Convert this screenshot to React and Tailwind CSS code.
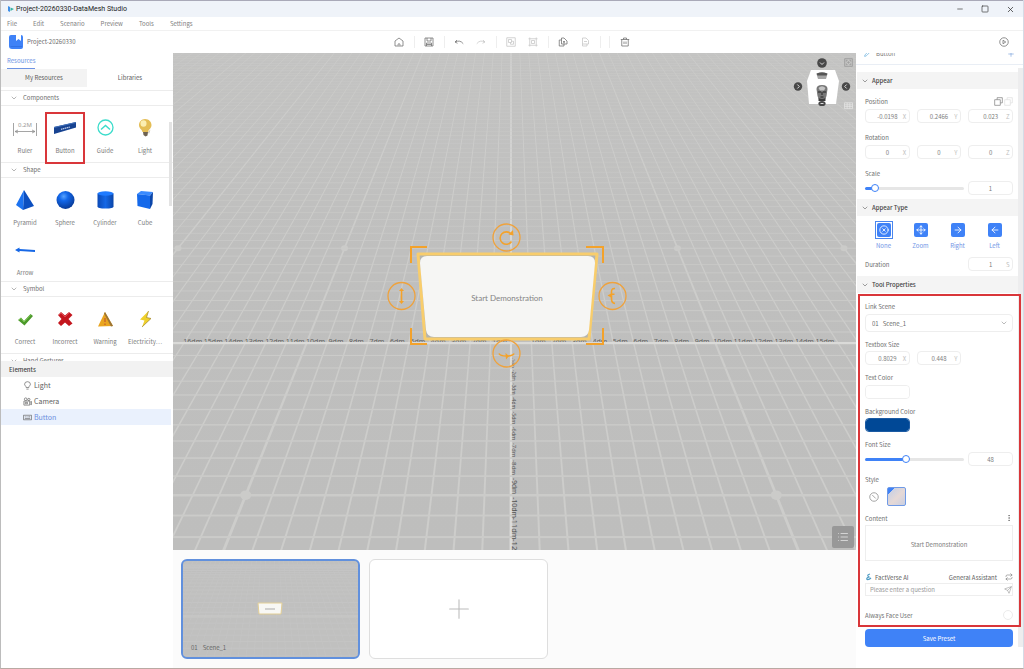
import React from "react";
import {
  Minus, Square, X, ChevronDown, CircleX, Move, ArrowRight, ArrowLeft, List, Plus,
  EllipsisVertical, Send, Repeat, Pencil,
} from "lucide-react";

/* ---------- Floor grid projection ---------- */
const CX = 338;
const HORIZON = -221;
const lineY = (n) => HORIZON + 22350 / (43.7 + n);
const unit = (y) => 0.04 * (y - HORIZON);

function Floor() {
  const rows = Array.from({ length: 72 }, (_, i) => i - 13);
  const cols = Array.from({ length: 101 }, (_, i) => i - 50);
  const top = unit(0);
  const bottom = unit(500);
  return (
    <>
      <defs>
        <linearGradient id="floor" x1="0" y1="0" x2="0" y2="1">
          <stop offset="0" stopColor="#c3c3c2" />
          <stop offset="0.4" stopColor="#bfbfbe" />
          <stop offset="1" stopColor="#bebebd" />
        </linearGradient>
      </defs>
      <rect x="-400" width="1483" height="497" fill="url(#floor)" />
      {cols.map((k) => {
        const w = k === 0 ? 0.05 : k % 10 === 0 ? 0.055 : 0.036;
        return (
          <polygon
            key={k}
            fill={k === 0 ? "#dcdcda" : "#cdcdcb"}
            points={`${CX + (k - w) * top},0 ${CX + (k + w) * top},0 ${CX + (k + w) * bottom},500 ${CX + (k - w) * bottom},500`}
          />
        );
      })}
      {rows.map((n) => {
        const z = 43.7 + n;
        const w = (22350 / (z * z)) * (n % 10 === 0 ? 0.13 : 0.09);
        return (
          <rect key={n} x="-400" width="1483" y={lineY(n) - w / 2} height={Math.max(w, 0.4)} fill={n === 0 ? "#dadad8" : "#cbcbc9"} />
        );
      })}
      {[-10, 10].map((n) =>
        [-20, -10, 10, 20].map((k) => {
          const y = lineY(n);
          const x = CX + k * unit(y);
          const r = unit(y) * 0.21;
          return <ellipse key={`${n}:${k}`} cx={x} cy={y} rx={r} ry={r * 0.85} fill="#cbcbc9" />;
        })
      )}
    </>
  );
}

function AxisLabels() {
  const s = unit(lineY(0));
  return (
    <g fill="#626261" fontFamily="'Noto Sans', sans-serif">
      {Array.from({ length: 16 }, (_, i) => i + 1).map((n) => (
        <text key={`l${n}`} x={CX + 8 - s * n} y="291" fontSize="7" textAnchor="middle">{`-${n}dm`}</text>
      ))}
      {Array.from({ length: 15 }, (_, i) => i + 1).map((n) => (
        <text key={`r${n}`} x={CX + 7 + s * n} y="291" fontSize="7" textAnchor="middle">{`${n}dm`}</text>
      ))}
      <rect x="-400" y="289" width="1483" height="2" fill="#dadad8" />
      {Array.from({ length: 12 }, (_, i) => i + 1).map((n) => {
        const y = lineY(-n);
        const gap = lineY(-n - 1) - y;
        return (
          <text key={`d${n}`} fill="#555" fontSize={gap * 0.34} transform={`translate(${CX + 1} ${y + 2}) rotate(90)`}>{`-${n}dm`}</text>
        );
      })}
    </g>
  );
}

function SceneCanvas() {
  return (
    <svg viewBox="0 0 683 497" preserveAspectRatio="xMidYMid slice" className="absolute inset-0 size-full">
      <Floor />
      <AxisLabels />
      <path d="M245 201H424L416 286H252Z" fill="#b4b4ae" stroke="#f8cd6c" strokeWidth="3" strokeLinejoin="round" />
      <path d="M254 203H415Q422 203 422 210L416 277Q415 284 408 284H261Q254 284 253 277L247 210Q247 203 254 203Z" fill="#f6f6f4" />
      <g fill="none" stroke="#f3a22b" strokeWidth="2">
        <path d="M238 210V194H254M413 194H430V210M238 275V291H254M413 291H430V275" />
      </g>
      <g fill="none" stroke="#efa23c" strokeWidth="1.3">
        <circle cx="333.500" cy="184.500" r="13.500" />
        <circle cx="228.500" cy="243" r="13.500" />
        <circle cx="439.500" cy="243" r="13.500" />
        <circle cx="333.500" cy="300.500" r="13.500" />
      </g>
      <g fill="none" stroke="#f3a22b" strokeWidth="1.6">
        <path d="M338.500 188.500A6.200 6.200 0 1 1 338 181" />
        <path d="M228.500 237V249" />
        <path d="M442 235.500Q438 235 438.500 240V246Q438.500 250 442 250.500" />
        <path d="M326 300.500Q327 303 333.500 303T341 300.500" />
      </g>
      <g fill="#f3a22b">
        <path d="M335.500 181.500L340.500 182.500L340 177Z" />
        <path d="M226 238L228.500 235L231 238ZM226 248L228.500 251L231 248Z" />
        <path d="M434.500 242.500L438 240.500H441.500V242H438V244.500Z" />
        <path d="M332.500 300L336 303L333 306.500Z" />
      </g>
      <text x="334" y="248" fontSize="8" textAnchor="middle" fill="#858585" fontFamily="Lato, sans-serif">Start Demonstration</text>
    </svg>
  );
}

function ViewCube() {
  return (
    <svg viewBox="0 0 64 56" className="h-14 w-16">
      <path d="M19 16H43L47 27L44 50H17L15 27Z" fill="#fff" />
      <g fill="#484848">
        <circle cx="30" cy="9" r="4.800" />
        <circle cx="6" cy="32.500" r="4.200" />
        <circle cx="54" cy="32.500" r="4.200" />
        <ellipse cx="30" cy="49.500" rx="3.600" ry="2.600" />
      </g>
      <path d="M28 8.500L30 10.500L32 8.500M5.300 30.500L7.300 32.500L5.300 34.500M54.700 30.500L52.700 32.500L54.700 34.500M28.500 49.500H31.500" fill="none" stroke="#ddd" />
      <path d="M24.500 20Q30 16 35.500 20L34 25H26Z" fill="#a5a5a5" />
      <path d="M24.500 19.500Q30 17.500 35.500 19.500L34.500 21.500H25.500Z" fill="#555" />
      <path d="M24.500 35Q24.500 31 30 31T35.500 35L34.500 42Q33 47 30 47Q27 47 25.500 42Z" fill="#777" />
      <path d="M26.500 34Q30 30.500 33.500 34L32 36.500H28Z" fill="#c4c4c4" />
      <path d="M26 38H29M31 38H34M28.500 43H31.500M30 38V41" stroke="#252525" />
      <path d="M26.500 44Q30 46 33.500 44V47H26.500Z" fill="#3a3a3a" />
    </svg>
  );
}

/* ---------- Line icons ---------- */
const Line = ({ className = "size-[10px]", children }) => (
  <svg viewBox="0 0 20 20" className={className} fill="none" stroke="currentColor" strokeWidth="1.500" strokeLinejoin="round">{children}</svg>
);
const HomeIcon = () => <Line><path d="M2 18V8L10 2L18 8V18ZM8 17V14.500Q10 12 12 14.500V17" /></Line>;
const SaveIcon = () => <Line><path d="M2 2H18V18H2ZM6 2V8H14V2M5 18V12H15V18M5 15H15" /></Line>;
const UndoIcon = () => <Line><path d="M6 6L2 10L7 12.500M2.500 10Q12 5 18.500 13.500" /></Line>;
const RedoIcon = () => <Line><path d="M14 6L18 10L13 12.500M17.500 10Q8 5 1.500 13.500" /></Line>;
const GroupIcon = () => <Line><path d="M1.500 1.500H18.500V18.500H1.500ZM5 5H11V11H5ZM9 14.500H15V8.500M9 14.500V11M11 8.500H15" /></Line>;
const UngroupIcon = () => <Line><path d="M3.500 3.500H16.500V16.500H3.500ZM7 7H13V13H7ZM1 3.500H3.500V1M19 3.500H16.500V1M16.500 19V16.500H19M1 16.500H3.500V19" /></Line>;
const CopyIcon = () => <Line><path d="M7 2H12L18 8V14H7ZM7 6H2.500V18H12V14M10 9H14M10 11.500H14" /></Line>;
const PasteIcon = () => <Line><path d="M5 2H12L17 7V14H5ZM5 14V18H14V14M8 9H14" /></Line>;
const TrashIcon = () => <Line><path d="M1.500 5H18.500M7 5V2H13V5M3.500 5V18H16.500V5M8 9V14M12 9V14" /></Line>;
const PlayIcon = () => <Line><circle cx="10" cy="10" r="8.500" /><path d="M8 6.500L13.500 10L8 13.500Z" /></Line>;
const BulbIcon = () => <Line className="size-[9px]"><path d="M7 14.500Q7 12.500 5.500 11Q3.500 9 3.500 7Q4 1.500 10 1.500T16.500 7Q16.500 9 14.500 11Q13 12.500 13 14.500ZM7.500 18H12.500" /></Line>;
const CameraIcon = () => (
  <Line className="size-[9px]">
    <circle cx="6" cy="5" r="3" /><circle cx="13" cy="5.500" r="2.500" />
    <path d="M2 9H15V18H2ZM15 12L19 10V17L15 15M5 12H10V15H5Z" />
  </Line>
);
const ButtonIcon = () => <Line className="size-[9px]"><path d="M1 5H19V15H1ZM4 8.500H6M8 8.500H10M12 8.500H16M4 12H16" /></Line>;
const FocusIcon = () => <Line className="size-[9px]"><path d="M1.500 1.500H18.500V18.500H1.500ZM5 8V5H8M12 5H15V8M15 12V15H12M8 15H5V12" /><circle cx="10" cy="10" r="1.500" /></Line>;
const GridIcon = () => <Line className="size-[9px]"><path d="M1 4H19V17H1ZM1 8.500H19M1 12.500H19M7 4V17M13 4V17" /></Line>;
const PagesIcon = () => <Line className="size-[9px]"><path d="M7 1.500H18.500V13H14V18.500H1.500V6H7ZM7 6H14V13" /></Line>;
const NoneIcon = () => <Line className="size-[10px]"><circle cx="10" cy="10" r="8.500" /><path d="M6.500 6L13.500 13" /></Line>;

/* ---------- Library artwork ---------- */
const Art = ({ children }) => <svg viewBox="0 0 28 28" className="size-7">{children}</svg>;

const art = {
  Ruler: (
    <Art>
      <text x="14" y="13" fontSize="6" textAnchor="middle" fill="#999" fontFamily="'Noto Sans', sans-serif">0.2M</text>
      <path d="M2.500 9V22M25.500 9V22M4 17.500H24M7 16L4 17.500L7 19M21 16L24 17.500L21 19" fill="none" stroke="#8e8e8e" strokeWidth=".8" />
    </Art>
  ),
  Button: (
    <Art>
      <path d="M3 13L25 8V13.500L3 20Z" fill="#174391" />
      <path d="M3 13L25 8V9L3 14Z" fill="#4472ba" />
      <path d="M10 15.300L19 13" stroke="#b9c8e6" strokeWidth="1.200" strokeDasharray="1.500 .5" />
    </Art>
  ),
  Guide: (
    <Art>
      <circle cx="14.500" cy="13.500" r="7.500" fill="none" stroke="#3cdccb" strokeWidth="1.300" />
      <path d="M10 15.500L14.500 11.500L19 15.500" fill="none" stroke="#3cdccb" strokeWidth="1.500" />
    </Art>
  ),
  Light: (
    <Art>
      <path d="M14 5C18 5 20.500 8 20.500 11C20.500 14.500 17.500 15.500 17 18H11.500C11 15.500 8 14.500 8 11C8 8 10.500 5 14 5Z" fill="#e4bd55" />
      <ellipse cx="12.500" cy="9.500" rx="3" ry="3.200" fill="#fbeeb2" />
      <path d="M12 18H17L16.500 21.500L14.500 22.500L12.500 21Z" fill="#6e6251" />
      <path d="M17 18L19.500 15.500L18 20Z" fill="#cfc6ae" />
    </Art>
  ),
  Pyramid: (
    <Art>
      <path d="M13 4L23 20L12 24Z" fill="#0c4fc0" />
      <path d="M13 4L12 24L5 19Z" fill="#1d73f0" />
    </Art>
  ),
  Sphere: (
    <Art>
      <defs>
        <radialGradient id="ball" cx=".4" cy=".3" r=".7">
          <stop offset="0" stopColor="#58a3ff" />
          <stop offset=".35" stopColor="#1267ea" />
          <stop offset="1" stopColor="#083b98" />
        </radialGradient>
      </defs>
      <circle cx="14.500" cy="14" r="9" fill="url(#ball)" />
    </Art>
  ),
  Cylinder: (
    <Art>
      <defs>
        <linearGradient id="tube">
          <stop offset="0" stopColor="#0b4ab6" />
          <stop offset=".5" stopColor="#1568e6" />
          <stop offset="1" stopColor="#0a45a8" />
        </linearGradient>
      </defs>
      <path d="M6.500 7.500V20.500Q6.500 22.500 14.500 22.500T22.500 20.500V7.500Z" fill="url(#tube)" />
      <ellipse cx="14.500" cy="7.500" rx="8" ry="2.200" fill="#1f7bff" />
    </Art>
  ),
  Cube: (
    <Art>
      <path d="M6 8L10 5L22 6L19 9.500Z" fill="#3a8bff" />
      <path d="M6 8L19 9.500V23L6.500 20Z" fill="#1569ea" />
      <path d="M19 9.500L22 6L21.500 18L19 23Z" fill="#0b46aa" />
    </Art>
  ),
  Arrow: (
    <Art>
      <path d="M4 14L8.500 11.500V13L24 14V16L8.500 15V16.500Z" fill="#1768e6" />
    </Art>
  ),
  Correct: (
    <Art>
      <path d="M7 15L10 12.500L13 16L19.500 9L22 11L13.500 20.500Z" fill="#4c9a2a" />
      <path d="M8 15L10 13.300L13 17L19.500 10" fill="none" stroke="#7cc653" />
    </Art>
  ),
  Incorrect: (
    <Art>
      <path d="M7 10L10 7L14 10.500L18 7L21.500 10L17.500 14L21.500 18.500L18 21L14 17.500L10 21L7 18L10.500 14Z" fill="#c4161e" />
      <path d="M8 10L10 8L14 12L18 8" fill="none" stroke="#e5565a" strokeWidth=".8" />
    </Art>
  ),
  Warning: (
    <Art>
      <path d="M14 7L22 21L7 21.500Z" fill="#e9a51f" />
      <path d="M14 7L22 21L20 21.500L13 8.500Z" fill="#9a7436" />
      <path d="M14 13V17M14 18.500V20" stroke="#c65a2c" strokeWidth="1.200" />
    </Art>
  ),
  "Electricity⋯": (
    <Art>
      <path d="M17.500 6L9 14.500L13.500 15.500L11 22L20 13.500L15.500 12.500Z" fill="#efd02b" />
      <path d="M17.500 6L15.500 12.500L20 13.500L11 22" fill="none" stroke="#9d8325" strokeWidth=".7" />
    </Art>
  ),
};

/* ---------- Shared controls ---------- */
function GroupHeader({ children }) {
  return (
    <button className="flex h-4 w-full shrink-0 items-center gap-[5px] border-y border-[#ececec] pl-[9px] text-left leading-[14px] text-[#6d6d6d]">
      <ChevronDown className="size-2" strokeWidth={1.5} />
      <span>{children}</span>
    </button>
  );
}

function Library({ items, marked }) {
  return (
    <div className={items.length > 4 ? "grid shrink-0 grid-cols-4 pt-[3px] pr-2 pl-1" : "grid shrink-0 grid-cols-4 py-[3px] pr-2 pl-1"}>
      {items.map((name) => (
        <button key={name} className="relative flex h-[50px] flex-col items-center gap-px pt-[5px] text-[#7c7c7c]">
          {art[name]}
          <span className="h-[15px] leading-[15px] whitespace-nowrap">{name}</span>
          {name === marked && <span className="absolute inset-x-0 top-[3px] -bottom-[5px] border-2 border-[#d9363a]" />}
        </button>
      ))}
    </div>
  );
}

function PropHeader({ children }) {
  return (
    <button className="flex h-[17px] w-full shrink-0 items-center gap-[3px] bg-[#f4f4f4] pl-1 text-left font-medium text-[#444]">
      <ChevronDown className="size-2" strokeWidth={1.5} />
      {children}
    </button>
  );
}

function NumberField({ label, value, suffix }) {
  return (
    <label className="flex h-[14px] min-w-0 items-center rounded-sm border border-[#eeeeee] bg-white">
      <input aria-label={label} defaultValue={value} className={suffix ? "w-full min-w-0 flex-1 pl-[6px] text-center text-[#7c7c7c] outline-none" : "w-full min-w-0 flex-1 text-center text-[#7c7c7c] outline-none"} />
      {suffix && <span className="w-[6px] text-[#bdbdbd]">{suffix}</span>}
    </label>
  );
}

const Label = ({ children, htmlFor }) => (
  <label htmlFor={htmlFor} className="block h-3 leading-[13px] text-[#6f6f6f]">{children}</label>
);

const rangeBase =
  "h-[3px] w-full appearance-none rounded-full outline-none [&::-webkit-slider-thumb]:size-2 [&::-webkit-slider-thumb]:appearance-none [&::-webkit-slider-thumb]:rounded-full [&::-webkit-slider-thumb]:border [&::-webkit-slider-thumb]:border-solid [&::-webkit-slider-thumb]:border-[#3f82f7] [&::-webkit-slider-thumb]:bg-white ";
const colorBase =
  "block h-[14px] w-[45px] appearance-none rounded-sm border bg-white [&::-webkit-color-swatch-wrapper]:p-0 [&::-webkit-color-swatch]:rounded-xs [&::-webkit-color-swatch]:border-0 ";

function SliderRow({ id, label, value, fill, max, pos }) {
  return (
    <div className="flex items-center gap-1">
      <div className="flex flex-1 items-center">
        <input id={id} type="range" min="0" max={max} defaultValue={pos} className={rangeBase + fill} />
      </div>
      <div className="w-[45px]"><NumberField label={label} value={value} /></div>
    </div>
  );
}

function AppearOption({ icon: Icon, label, active }) {
  return (
    <button className="flex flex-col items-center text-[#7095e6]">
      <span className={active ? "border border-[#4b86ee] p-px" : "border border-transparent p-px"}>
        <span className="flex size-[14px] items-center justify-center rounded-xs bg-[#3f82f7] text-white">
          <Icon className="size-[10px]" strokeWidth={2} />
        </span>
      </span>
      <span className="h-3 leading-[13px]">{label}</span>
    </button>
  );
}

function ToolButton({ icon: Icon, label, muted }) {
  return (
    <button aria-label={label} className={muted ? "flex w-[15px] justify-center text-[#c4c4c4]" : "flex w-[15px] justify-center text-[#6c6c6c]"}>
      <Icon />
    </button>
  );
}
const Sep = () => <span className="h-3 w-px bg-[#eeeeee]" />;

/* ---------- Panels ---------- */
function TopBars() {
  return (
    <header className="shrink-0">
      <div className="flex h-[17px] items-center border-t border-[#a9a9b8] bg-[#eff3f9] pl-[6px]">
        <svg viewBox="0 0 8 8" className="size-2"><path d="M1 1L3 2V7L1 6Z" fill="#3f8fe8" /><path d="M3.500 2.500L7 4L3.500 6Z" fill="#35b3a3" /></svg>
        <h1 className="ml-px flex-1 font-[Roboto,sans-serif] text-[7px] text-[#222]">Project-20260330-DataMesh Studio</h1>
        <div className="flex items-center gap-[17px] pr-2 text-[#333]">
          <button aria-label="Minimize"><Minus className="size-2" /></button>
          <button aria-label="Maximize"><Square className="size-2" /></button>
          <button aria-label="Close"><X className="size-[9px]" /></button>
        </div>
      </div>
      <nav className="flex h-[14px] items-center gap-4 border-b border-[#f1f1f1] pl-[6px] leading-[14px] text-[#808080]">
        {["File", "Edit", "Scenario", "Preview", "Tools", "Settings"].map((m) => <button key={m}>{m}</button>)}
      </nav>
      <div className="flex h-[22px] items-center">
        <div className="flex flex-1 items-center gap-1 pl-2 text-[#6c6c6c]">
          <svg viewBox="0 0 14 14" className="size-[14px]">
            <path d="M2 0H12Q14 0 14 2V12Q14 14 12 14H3Q0 14 0 11V2Q0 0 2 0Z" fill="#3f82f7" />
            <path d="M7 0H12V6L9.500 4L7 6Z" fill="#fff" />
            <path d="M1.500 11.500H13" stroke="#2f6fe0" strokeWidth=".8" />
          </svg>
          <span className="leading-[14px]">Project-20260330</span>
        </div>
        <div className="flex items-center gap-[7px] pl-[6px]">
          <ToolButton icon={HomeIcon} label="Home" />
          <Sep />
          <ToolButton icon={SaveIcon} label="Save" />
          <Sep />
          <ToolButton icon={UndoIcon} label="Undo" />
          <ToolButton icon={RedoIcon} label="Redo" muted />
          <Sep />
          <ToolButton icon={GroupIcon} label="Group" muted />
          <ToolButton icon={UngroupIcon} label="Ungroup" muted />
          <Sep />
          <ToolButton icon={CopyIcon} label="Copy" />
          <ToolButton icon={PasteIcon} label="Paste" muted />
          <div className="flex gap-2 pr-px"><Sep /><Sep /></div>
          <ToolButton icon={TrashIcon} label="Delete" />
        </div>
        <div className="flex flex-1 justify-end pr-[14px] text-[#6c6c6c]">
          <button aria-label="Play"><PlayIcon /></button>
        </div>
      </div>
    </header>
  );
}

function ResourcePanel() {
  const row = "flex h-4 items-center gap-[2px] pl-[22px] ";
  return (
    <aside className="flex w-[172px] shrink-0 flex-col">
      <div className="flex h-4 shrink-0 items-stretch pl-[6px]">
        <button className="border-b border-[#6d93e3] leading-[14px] text-[#6d93e3]">Resources</button>
      </div>
      <div className="grid h-[18px] shrink-0 grid-cols-2 leading-[14px] text-[#5c5c5c]">
        <button className="bg-[#f3f3f3]">My Resources</button>
        <button>Libraries</button>
      </div>
      <div className="relative mt-[3px] flex h-[271px] shrink-0 flex-col overflow-hidden">
        <GroupHeader>Components</GroupHeader>
        <Library items={["Ruler", "Button", "Guide", "Light"]} marked="Button" />
        <GroupHeader>Shape</GroupHeader>
        <Library items={["Pyramid", "Sphere", "Cylinder", "Cube", "Arrow"]} />
        <GroupHeader>Symbol</GroupHeader>
        <Library items={["Correct", "Incorrect", "Warning", "Electricity⋯"]} />
        <GroupHeader>Hand Gestures</GroupHeader>
        <span className="absolute top-8 right-px h-[84px] w-[3px] bg-[#e3e3e3]" />
      </div>
      <h2 className="flex h-4 shrink-0 items-center bg-[#f2f2f2] pl-2 font-medium text-[#444]">Elements</h2>
      <div className="flex flex-col text-[7px] text-[#606060]">
        <button className={row}><BulbIcon />Light</button>
        <button className={row}><CameraIcon />Camera</button>
        <button className={row + "mr-[2px] bg-[#eaf1fd]"}><ButtonIcon /><span className="text-[#6a8fe0]">Button</span></button>
      </div>
    </aside>
  );
}

function Stage() {
  return (
    <main className="flex min-w-0 flex-1 flex-col">
      <section aria-label="Scene" className="relative min-h-0 flex-1 overflow-hidden bg-[#c0c0bf]">
        <SceneCanvas />
        <div className="absolute top-px right-0 flex">
          <ViewCube />
        </div>
        <button aria-label="Focus" className="absolute top-[5px] right-[3px] text-[#8f8f8f]"><FocusIcon /></button>
        <button aria-label="Grid" className="absolute top-12 right-[3px] text-[#e8e8e8]"><GridIcon /></button>
        <button aria-label="Scene list" className="absolute right-[2px] bottom-[2px] flex size-[22px] items-center justify-center rounded-xs bg-[#989898] text-[#e8e8e8]">
          <List className="size-3" strokeWidth={1.5} />
        </button>
      </section>
      <section aria-label="Scenes" className="flex h-[118px] shrink-0 items-start gap-[9px] bg-[#fbfbfb] px-2 pt-[9px]">
        <button className="relative h-[100px] w-[179px] overflow-hidden rounded-md border-2 border-[#6190dd] bg-[#c0c0bf]">
          <svg viewBox="0 0 175 96" preserveAspectRatio="none" className="size-full">
            {Array.from({ length: 26 }, (_, i) => (
              <path key={i} d={`M0 ${4 + i * i * 0.14 + i * 0.4}H175`} stroke="#c6c6c5" strokeWidth=".7" />
            ))}
            {Array.from({ length: 41 }, (_, i) => (
              <path key={`v${i}`} d={`M${87 + (i - 20) * 4.5} 0L${87 + (i - 20) * 8} 96`} stroke="#c5c5c4" strokeWidth=".6" />
            ))}
            <path d="M0 55H175" stroke="#cdcdcc" strokeWidth=".8" />
            <path d="M75 42H99L98 53H76Z" fill="#f8f8f5" stroke="#e3cf96" strokeWidth="1" />
            <path d="M82 48H92" stroke="#aaa" strokeWidth="1" />
          </svg>
          <span className="absolute bottom-[3px] left-2 flex gap-[5px] text-[#666]"><span>01</span><span>Scene_1</span></span>
        </button>
        <button aria-label="Add scene" className="flex h-[100px] w-[179px] items-center justify-center rounded-md border border-[#dedede] bg-white text-[#bbb]">
          <Plus className="size-8" strokeWidth={0.8} />
        </button>
      </section>
    </main>
  );
}

function PropertyPanel() {
  return (
    <aside className="flex w-[167px] shrink-0 flex-col overflow-hidden bg-white">
      <div className="flex h-3 shrink-0 items-center justify-between overflow-hidden border-b border-[#e9eef5] pr-2 pb-[10px] pl-2 text-[#777]">
        <span className="flex items-center gap-[5px]"><Pencil className="size-[7px] text-[#4aa0d8]" />Button</span>
        <Plus className="size-2 text-[#7ca3dd]" />
      </div>
      <div className="flex min-h-0 flex-1">
        <div className="min-w-0 flex-1 pt-[7px] pl-px">
          <PropHeader>Appear</PropHeader>
          <div className="pt-[6px] pr-[5px] pb-1 pl-2">
            <div className="flex items-center justify-between">
              <Label>Position</Label>
              <span className="flex gap-px text-[#777]"><PagesIcon /><span className="text-[#ddd]"><PagesIcon /></span></span>
            </div>
            <div className="mt-[2px] grid grid-cols-3 gap-[7px]">
              <NumberField label="Position X" value="-0.0198" suffix="X" />
              <NumberField label="Position Y" value="0.2466" suffix="Y" />
              <NumberField label="Position Z" value="0.023" suffix="Z" />
            </div>
            <div className="mt-2"><Label>Rotation</Label></div>
            <div className="mt-[2px] grid grid-cols-3 gap-[7px]">
              <NumberField label="Rotation X" value="0" suffix="X" />
              <NumberField label="Rotation Y" value="0" suffix="Y" />
              <NumberField label="Rotation Z" value="0" suffix="Z" />
            </div>
            <div className="mt-2"><Label htmlFor="scale">Scale</Label></div>
            <div className="mt-[2px]">
              <SliderRow id="scale" label="Scale value" value="1" max="100" pos="7" fill="bg-[linear-gradient(to_right,#3f82f7_10%,#e6e6e6_10%)]" />
            </div>
          </div>
          <PropHeader>Appear Type</PropHeader>
          <div className="pt-[5px] pr-[5px] pb-[5px] pl-2">
            <div className="grid grid-cols-4">
              <AppearOption icon={CircleX} label="None" active />
              <AppearOption icon={Move} label="Zoom" />
              <AppearOption icon={ArrowRight} label="Right" />
              <AppearOption icon={ArrowLeft} label="Left" />
            </div>
            <div className="mt-[6px] grid grid-cols-3 items-center gap-[7px]">
              <div className="col-span-2"><Label>Duration</Label></div>
              <NumberField label="Duration" value="1" suffix="S" />
            </div>
          </div>
          <PropHeader>Tool Properties</PropHeader>
          <div className="relative pt-[7px] pr-[5px] pb-[6px] pl-2">
            <span className="pointer-events-none absolute top-px -right-[3px] bottom-0 left-px z-10 border-2 border-[#d9363a]" />
            <Label htmlFor="link">Link Scene</Label>
            <div className="mt-[2px] flex h-[18px] items-center rounded-sm border border-[#eeeeee] pr-1 pl-[6px]">
              <select id="link" className="min-w-0 flex-1 appearance-none text-[#6c6c6c] outline-none">
                <option>01&nbsp;&nbsp; Scene_1</option>
              </select>
              <ChevronDown className="size-2 text-[#777]" strokeWidth={1.5} />
            </div>
            <div className="mt-[6px]"><Label>Textbox Size</Label></div>
            <div className="mt-px grid grid-cols-3 gap-[7px]">
              <NumberField label="Textbox width" value="0.8029" suffix="X" />
              <NumberField label="Textbox height" value="0.448" suffix="Y" />
            </div>
            <div className="mt-[6px]"><Label htmlFor="tc">Text Color</Label></div>
            <input id="tc" type="color" defaultValue="#ffffff" className={colorBase + "mt-[2px] border-[#eeeeee]"} />
            <div className="mt-[6px]"><Label htmlFor="bc">Background Color</Label></div>
            <input id="bc" type="color" defaultValue="#004896" className={colorBase + "mt-px border-[#1c5ba3]"} />
            <div className="mt-[6px]"><Label htmlFor="fs">Font Size</Label></div>
            <div className="mt-[2px]">
              <SliderRow id="fs" label="Font size value" value="48" max="100" pos="41" fill="bg-[linear-gradient(to_right,#3f82f7_41%,#e6e6e6_41%)]" />
            </div>
            <div className="mt-[7px]"><Label>Style</Label></div>
            <div className="mt-[2px] flex items-center gap-2 pl-1">
              <button aria-label="No style" className="text-[#888]"><NoneIcon /></button>
              <button aria-label="Gradient style" className="size-[19px] rounded-xs border border-[#6f9ae6] bg-[linear-gradient(135deg,#3f82f7_18%,#cdd2e2_19%,#e6d9d6_55%,#c9cfe2)]" />
            </div>
            <div className="mt-[6px] flex items-center justify-between">
              <Label htmlFor="content">Content</Label>
              <button aria-label="More" className="text-[#666]"><EllipsisVertical className="size-2" /></button>
            </div>
            <textarea id="content" rows="1" defaultValue="Start Demonstration" className="mt-px block h-9 w-full resize-none border border-[#eeeeee] pt-3 text-center leading-[13px] text-[#7c7c7c] outline-none" />
            <div className="mt-[10px] flex h-3 items-center text-[#606060]">
              <svg viewBox="0 0 8 8" className="size-2"><path d="M5 1Q1 2 4 4Q1 5 2 6.500Q4 7 6 5" fill="none" stroke="#4d9bc4" strokeWidth="1.200" /></svg>
              <span className="ml-[2px] flex-1">FactVerse AI</span>
              <button className="flex items-center gap-2">General Assistant<Repeat className="size-2" strokeWidth={1.5} /></button>
            </div>
            <div className="flex h-[13px] items-center border border-[#eeeeee] pl-1">
              <input aria-label="Question" placeholder="Please enter a question" className="min-w-0 flex-1 outline-none placeholder:text-[#999]" />
              <button aria-label="Send" className="text-[#888]"><Send className="size-2" strokeWidth={1.5} /></button>
            </div>
            <div className="mt-[13px] flex items-center justify-between">
              <Label htmlFor="face">Always Face User</Label>
              <input id="face" type="checkbox" className="size-[10px] appearance-none rounded-full border border-[#ececec] bg-white" />
            </div>
          </div>
          <div className="pt-[2px] pr-[5px] pl-2">
            <button className="h-[18px] w-full rounded-sm bg-[#3f82f7] text-white">Save Preset</button>
          </div>
        </div>
        <span className="mt-[3px] mb-[21px] w-[5px] shrink-0 bg-[#ededee]" />
      </div>
    </aside>
  );
}

export default function App() {
  return (
    <div className="flex h-screen flex-col overflow-hidden border-r border-b border-l border-r-[#d5dbe6] border-b-[#b9a9a3] border-l-[#bcbcbc] bg-white font-['Noto_Sans_CJK_SC','Noto_Sans',sans-serif] text-[6px] leading-[13px]">
      <TopBars />
      <div className="flex min-h-0 flex-1">
        <ResourcePanel />
        <Stage />
        <PropertyPanel />
      </div>
    </div>
  );
}
